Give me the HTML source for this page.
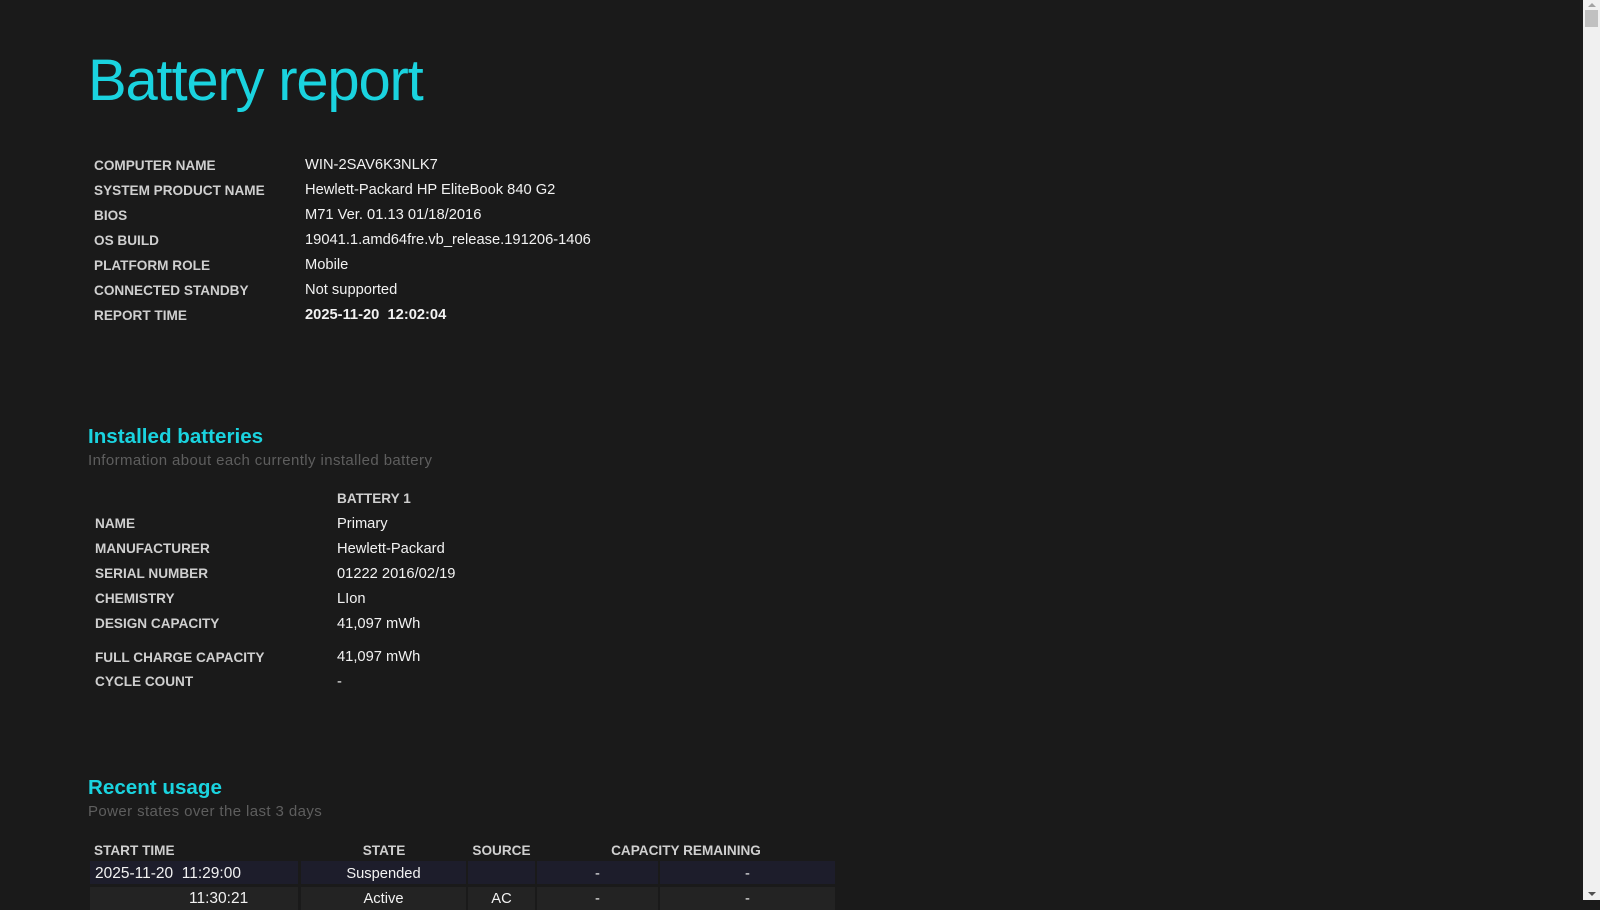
<!DOCTYPE html>
<html><head><meta charset="utf-8"><style>
html,body{margin:0;padding:0;width:1600px;height:900px;overflow:hidden;background:#1a1a1a;font-family:"Liberation Sans",sans-serif;}
.t{position:absolute;white-space:nowrap;font-size:14.7px;line-height:20px;}
.l{color:#cfcfcf;font-weight:bold;font-size:13.6px;padding-top:2px}
.v{color:#f2f2f2;}
.h{color:#1ad3df;font-size:20.6px;line-height:24px;font-weight:bold;}
.s{color:#5e5e5e;font-size:15px;letter-spacing:0.4px}
.r{position:absolute;height:23px;}
</style></head><body>
<div class="t" style="left:88px;top:51px;font-size:58px;line-height:60px;color:#1ad3df;letter-spacing:-1.2px">Battery report</div>

<div class="t l" style="left:94px;top:154px">COMPUTER NAME</div><div class="t v" style="left:305px;top:155px">WIN-2SAV6K3NLK7</div>
<div class="t l" style="left:94px;top:179px">SYSTEM PRODUCT NAME</div><div class="t v" style="left:305px;top:180px">Hewlett-Packard HP EliteBook 840 G2</div>
<div class="t l" style="left:94px;top:204px">BIOS</div><div class="t v" style="left:305px;top:205px">M71 Ver. 01.13 01/18/2016</div>
<div class="t l" style="left:94px;top:229px">OS BUILD</div><div class="t v" style="left:305px;top:230px">19041.1.amd64fre.vb_release.191206-1406</div>
<div class="t l" style="left:94px;top:254px">PLATFORM ROLE</div><div class="t v" style="left:305px;top:255px">Mobile</div>
<div class="t l" style="left:94px;top:279px">CONNECTED STANDBY</div><div class="t v" style="left:305px;top:280px">Not supported</div>
<div class="t l" style="left:94px;top:304px">REPORT TIME</div><div class="t v" style="left:305px;top:305px;font-weight:bold">2025-11-20&nbsp; 12:02:04</div>

<div class="t h" style="left:88px;top:425px">Installed batteries</div>
<div class="t s" style="left:88px;top:451px">Information about each currently installed battery</div>
<div class="t l" style="left:337px;top:487px">BATTERY 1</div>
<div class="t l" style="left:95px;top:512px">NAME</div><div class="t v" style="left:337px;top:514px">Primary</div>
<div class="t l" style="left:95px;top:537px">MANUFACTURER</div><div class="t v" style="left:337px;top:539px">Hewlett-Packard</div>
<div class="t l" style="left:95px;top:562px">SERIAL NUMBER</div><div class="t v" style="left:337px;top:564px">01222 2016/02/19</div>
<div class="t l" style="left:95px;top:587px">CHEMISTRY</div><div class="t v" style="left:337px;top:589px">LIon</div>
<div class="t l" style="left:95px;top:612px">DESIGN CAPACITY</div><div class="t v" style="left:337px;top:614px">41,097 mWh</div>
<div class="t l" style="left:95px;top:646px">FULL CHARGE CAPACITY</div><div class="t v" style="left:337px;top:647px">41,097 mWh</div>
<div class="t l" style="left:95px;top:670px">CYCLE COUNT</div><div class="t v" style="left:337px;top:672px">-</div>

<div class="t h" style="left:88px;top:776px">Recent usage</div>
<div class="t s" style="left:88px;top:802px">Power states over the last 3 days</div>
<div class="t l" style="left:94px;top:839px">START TIME</div>
<div class="t l" style="left:302px;width:164px;text-align:center;top:839px">STATE</div>
<div class="t l" style="left:468px;width:67px;text-align:center;top:839px">SOURCE</div>
<div class="t l" style="left:537px;width:298px;text-align:center;top:839px">CAPACITY REMAINING</div>

<div class="r" style="left:90px;width:208px;top:861px;background:#1d1d2b"></div>
<div class="r" style="left:301px;width:165px;top:861px;background:#1d1d2b"></div>
<div class="r" style="left:468px;width:67px;top:861px;background:#1d1d2b"></div>
<div class="r" style="left:537px;width:121px;top:861px;background:#1d1d2b"></div>
<div class="r" style="left:660px;width:175px;top:861px;background:#1d1d2b"></div>
<div class="r" style="left:90px;width:208px;top:887px;background:#232323"></div>
<div class="r" style="left:301px;width:165px;top:887px;background:#232323"></div>
<div class="r" style="left:468px;width:67px;top:887px;background:#232323"></div>
<div class="r" style="left:537px;width:121px;top:887px;background:#232323"></div>
<div class="r" style="left:660px;width:175px;top:887px;background:#232323"></div>

<div class="t v" style="left:95px;top:864px;font-size:15.5px">2025-11-20&nbsp; 11:29:00</div>
<div class="t v" style="left:301px;width:165px;text-align:center;top:864px">Suspended</div>
<div class="t v" style="left:537px;width:121px;text-align:center;top:864px">-</div>
<div class="t v" style="left:660px;width:175px;text-align:center;top:864px">-</div>
<div class="t v" style="left:189px;top:889px;font-size:15.5px">11:30:21</div>
<div class="t v" style="left:301px;width:165px;text-align:center;top:889px">Active</div>
<div class="t v" style="left:468px;width:67px;text-align:center;top:889px">AC</div>
<div class="t v" style="left:537px;width:121px;text-align:center;top:889px">-</div>
<div class="t v" style="left:660px;width:175px;text-align:center;top:889px">-</div>

<div style="position:absolute;left:1583px;top:0;width:17px;height:900px;background:#f0f0f0"></div>
<div style="position:absolute;left:1585px;top:10px;width:13px;height:17px;background:#c1c1c1"></div>
<div style="position:absolute;left:1588px;top:3px;width:0;height:0;border-left:4px solid transparent;border-right:4px solid transparent;border-bottom:4px solid #a3a3a3"></div>
<div style="position:absolute;left:1588px;top:892px;width:0;height:0;border-left:4px solid transparent;border-right:4px solid transparent;border-top:4px solid #505050"></div>
</body></html>
